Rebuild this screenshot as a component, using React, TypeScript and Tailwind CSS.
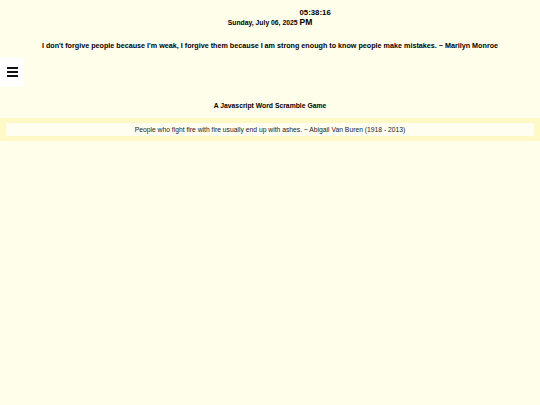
export default function App() {
  return (
    <div className="min-h-[405px] bg-[#fffeeb] font-['Liberation_Sans',Arial,sans-serif] text-black">
      <div className="flex justify-center pt-[18px]">
        <div className="flex items-end text-[6.8px] font-bold leading-none">
          <span>Sunday, July 06, 2025</span>
          <span className="relative ml-[2px] text-[8.5px] leading-none">
            PM
            <span className="absolute left-0 bottom-[10px] whitespace-nowrap text-[7.8px]">05:38:16</span>
          </span>
        </div>
      </div>
      <p className="mt-[14px] text-center text-[7.2px] font-bold">
        I don't forgive people because I'm weak, I forgive them because I am strong enough to know people make mistakes. ~ Marilyn Monroe
      </p>
      <div className="mt-[6px] flex h-[29px] w-[24px] items-center justify-center bg-white">
        <svg width="11" height="10" viewBox="0 0 11 10" fill="#111">
          <rect x="0" y="0" width="11" height="2" />
          <rect x="0" y="4" width="11" height="2" />
          <rect x="0" y="8" width="11" height="2" />
        </svg>
      </div>
      <h1 className="mt-[15px] text-center text-[6.8px] font-bold">A Javascript Word Scramble Game</h1>
      <div className="mt-[7px] bg-[#fff9c8] px-[6px] py-[5px]">
        <div className="bg-[#fffef0] py-[2px] text-center text-[6.75px] leading-[9px] text-[#222] shadow-[0_0_3px_#fff7c0]">
          People who fight fire with fire usually end up with ashes. ~ Abigail Van Buren (1918 - 2013)
        </div>
      </div>
    </div>
  );
}
